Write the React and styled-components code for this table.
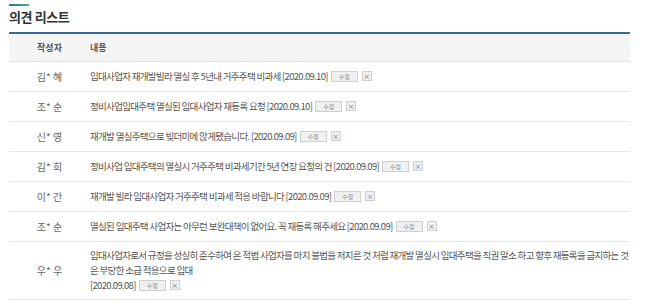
import React from "react";
import styled, { createGlobalStyle } from "styled-components";

const GlobalStyle = createGlobalStyle`
  body {
    margin: 0;
    background: #fff;
    font-family: "Noto Sans CJK KR", "Noto Sans", sans-serif;
  }
`;

const opinions = [
  { author: "김* 혜", text: "임대사업자 재개발빌라 멸실 후 5년내 거주주택 비과세", date: "2020.09.10" },
  { author: "조* 순", text: "정비사업임대주택 멸실된 임대사업자 재등록 요청", date: "2020.09.10" },
  { author: "신* 영", text: "재개발 멸실주택으로 빚더미에 앉게됐습니다.", date: "2020.09.09" },
  { author: "김* 희", text: "정비사업 임대주택의 멸실시 거주주택 비과세기간 5년 연장 요청의 건", date: "2020.09.09" },
  { author: "이* 간", text: "재개발 빌라 임대사업자 거주주택 비과세 적용 바랍니다", date: "2020.09.09" },
  { author: "조* 순", text: "멸실된 임대주택 사업자는 아무런 보완대책이 없어요. 꼭 재등록 해주세요", date: "2020.09.09" },
  {
    author: "우* 우",
    text: "임대사업자로서 규정을 성실히 준수하여 온 적법 사업자를 마치 불법을 저지른 것 처럼 재개발 멸실시 임대주택을 직권 말소 하고 향후 재등록을 금지하는 것은 부당한 소급 적용으로 임대",
    date: "2020.09.08",
    breakDate: true,
  },
];

export default function App() {
  return (
    <Wrapper>
      <GlobalStyle />
      <Accent />
      <Title>의견 리스트</Title>
      <Table>
        <thead>
          <tr>
            <HeadCell $w="81px" $center>작성자</HeadCell>
            <HeadCell>내용</HeadCell>
          </tr>
        </thead>
        <tbody>
          {opinions.map((item, index) => (
            <tr key={index}>
              <AuthorCell>{item.author}</AuthorCell>
              <ContentCell $multi={item.breakDate}>
                {item.text}
                {item.breakDate ? <br /> : " "}
                [{item.date}]
                <EditButton>수정</EditButton>
                <DeleteButton>×</DeleteButton>
              </ContentCell>
            </tr>
          ))}
        </tbody>
      </Table>
    </Wrapper>
  );
}

const Wrapper = styled.section`
  width: 621px;
  padding: 4px 0 0 9px;
`;

const Accent = styled.div`
  width: 20px;
  height: 2px;
  background: linear-gradient(90deg, #2f6fb3, #3dbb73);
`;

const Title = styled.h3`
  margin: 4px 0 8px;
  font-size: 13px;
  font-weight: 700;
  color: #333;
  line-height: 14px;
  letter-spacing: -0.4px;
`;

const Table = styled.table`
  width: 100%;
  border-collapse: collapse;
  border-top: 2px solid #3a6797;
`;

const HeadCell = styled.th`
  width: ${(p) => p.$w || "auto"};
  height: 27px;
  padding: 0;
  background: #f5f5f5;
  border-bottom: 1px solid #e2e2e2;
  font-size: 9px;
  font-weight: 700;
  color: #555;
  text-align: ${(p) => (p.$center ? "center" : "left")};
`;

const AuthorCell = styled.td`
  height: 29px;
  text-align: center;
  font-size: 10px;
  color: #666;
  border-bottom: 1px solid #e8e8e8;
  padding: 0;
`;

const ContentCell = styled.td`
  height: 29px;
  padding: ${(p) => (p.$multi ? "6px 0 6px 0" : "0")};
  font-size: 9.5px;
  line-height: 15px;
  color: #555;
  letter-spacing: -0.68px;
  word-break: break-all;
  border-bottom: 1px solid #e8e8e8;
`;

const EditButton = styled.span`
  display: inline-block;
  margin-left: 3px;
  padding: 0 7px;
  height: 9px;
  line-height: 9px;
  font-size: 6px;
  letter-spacing: 0;
  color: #888;
  background: #f0f0f0;
  border: 1px solid #cfcfcf;
  vertical-align: 1px;
`;

const DeleteButton = styled.span`
  display: inline-block;
  margin-left: 4px;
  width: 8px;
  height: 8px;
  line-height: 8px;
  font-size: 7px;
  letter-spacing: 0;
  text-align: center;
  color: #666;
  background: #f0f0f0;
  border: 1px solid #cfcfcf;
  vertical-align: 1px;
`;
